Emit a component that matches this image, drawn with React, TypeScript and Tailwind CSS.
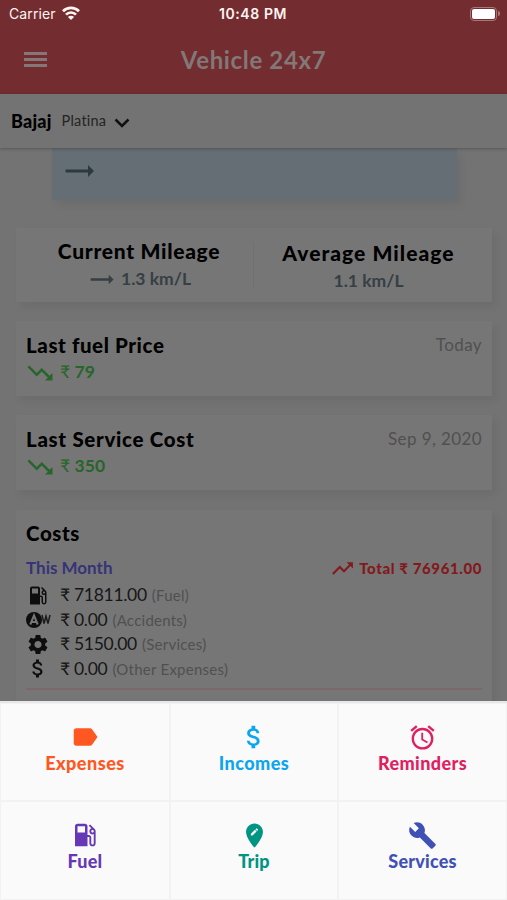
import React from "react";
import {
  MdLabel, MdAttachMoney, MdAccessAlarm, MdBuild, MdSettings, MdLocalGasStation,
  MdTrendingDown, MdTrendingUp, MdTrendingFlat, MdEditLocation,
} from "react-icons/md";

function AccidentIcon() {
  return (
    <svg viewBox="0 0 25 18" className="h-[18px] w-[25px] shrink-0">
      <circle cx="8" cy="9" r="8" fill="#0e0e0e" />
      <path d="M4.300 13.500 8 4.500l3.700 9M5.700 11h4.600" fill="none" stroke="#767676" strokeWidth="2" />
      <path d="m16 4 2 8.500 2-7.300 2 7.300L24 4" fill="none" stroke="#1c1c1c" strokeWidth="1.500" />
    </svg>
  );
}

const shadow = "shadow-[4px_5px_8px_rgba(0,0,0,0.06)]";

function PriceCard({ title, date, price, className, titleClass }: { title: string; date: string; price: string; className: string; titleClass: string }) {
  return (
    <section className={`mr-[15px] ml-4 h-[75px] shrink-0 bg-[#767676] px-[10px] pt-[11px] ${shadow} ${className}`}>
      <div className="flex h-[26px] items-center justify-between">
        <h2 className={`text-[20.500px] font-black text-black ${titleClass}`}>{title}</h2>
        <span className="text-[17px] tracking-[0.4px] text-[#505050]">{date}</span>
      </div>
      <div className="flex h-[29px] items-center text-[#28652b]">
        <MdTrendingDown className="-ml-px h-[30px] w-[30px]" />
        <span className="ml-[5px] text-[17.500px]">₹ <span className="font-bold">{price}</span></span>
      </div>
    </section>
  );
}

function CostRow({ icon, value, label }: { icon: React.ReactNode; value: string; label: string }) {
  return (
    <div className="flex h-[24.500px] items-center">
      <div className="flex w-6 justify-center text-[#0e0e0e]">{icon}</div>
      <span className="ml-[10px] text-[17.500px] tracking-[-0.300px] text-[#161616]">₹ {value}</span>
      <span className="ml-[5px] text-[15px] tracking-[0.250px] text-[#505050]">({label})</span>
    </div>
  );
}

function Action({ icon, label, className }: { icon: React.ReactNode; label: string; className: string }) {
  return (
    <button className={`flex flex-col items-center bg-[#fafafa] pt-[19px] ${className}`}>
      <span className="flex h-7 items-center justify-center">{icon}</span>
      <span className="text-[18px] leading-6 font-black">{label}</span>
    </button>
  );
}

export default function App() {
  return (
    <div className="flex h-[900px] w-[507px] flex-col overflow-hidden bg-[#737373] font-['Lato','Noto_Sans',sans-serif]">
      <header className="z-10 h-[94px] shrink-0 bg-[#732c2f]">
        <div className="grid h-[27px] grid-cols-3 items-center px-[9px] font-['Inter',sans-serif] text-[14px] text-[#fff4f2]">
          <div className="flex items-center gap-[6px]">
            <span className="tracking-[0.1px]">Carrier</span>
            <svg viewBox="0 0 18 14" className="-mt-[2px] h-[14px] w-[18px]" fill="none" stroke="currentColor" strokeWidth="2.700">
              <path d="M1 5.200a11.400 11.400 0 0 1 16 0M4 8.600a7 7 0 0 1 10 0" />
              <path d="M9 14 5.900 11a4.400 4.400 0 0 1 6.200 0z" fill="currentColor" stroke="none" />
            </svg>
          </div>
          <span className="-ml-px text-center font-semibold tracking-[0.600px] whitespace-nowrap">10:48 PM</span>
          <div className="-mr-[2px] flex items-center justify-end gap-px">
            <span className="h-[14px] w-[27px] rounded-[4px] border border-[#a87778] p-px">
              <span className="block h-full rounded-[2px] bg-white" />
            </span>
            <span className="h-[5px] w-[2px] rounded-r bg-[#a87778]" />
          </div>
        </div>
        <div className="grid h-[65px] grid-cols-[1fr_auto_1fr] items-center">
          <div className="ml-6 flex w-[23px] flex-col gap-[3px]">
            <i className="h-[3px] bg-[#857777]" /><i className="h-[3px] bg-[#857777]" /><i className="h-[3px] bg-[#857777]" />
          </div>
          <h1 className="text-[24px] font-bold tracking-[0.650px] text-[#827878]">Vehicle 24x7</h1>
        </div>
      </header>
      <div className="z-10 flex h-[54px] shrink-0 items-center bg-[#737373] pl-[11px] shadow-[0_1px_3px_rgba(0,0,0,0.25)]">
        <span className="text-[18px] font-black tracking-[0.200px] text-black">Bajaj</span>
        <span className="ml-[10px] text-[14.500px] tracking-[0.200px] text-[#242424]">Platina</span>
        <svg viewBox="0 0 16 10" className="mt-[4px] ml-2 h-[10px] w-4" fill="none" stroke="#111" strokeWidth="2.500"><path d="m1.500 1.500 6.500 6.500 6.500-6.500" /></svg>
      </div>
      <main className="flex min-h-0 flex-1 flex-col overflow-hidden">
        <div className={`mr-[50px] ml-[52px] h-[52px] shrink-0 bg-[#666e75] pt-[5px] pl-[8px] ${shadow}`}>
          <MdTrendingFlat className="h-[36px] w-[38px] text-[#2c3a40]" />
        </div>
        <section className={`mt-7 mr-[15px] ml-4 flex h-[74px] shrink-0 items-center bg-[#767676] ${shadow}`}>
          <div className="flex w-[237px] flex-col items-center pl-[9px]">
            <h2 className="text-[21px] leading-7 font-black tracking-[0.700px] text-black">Current Mileage</h2>
            <p className="flex h-7 items-center gap-[5px] text-[17.500px] font-bold text-[#353f44]"><MdTrendingFlat className="h-[29px] w-[29px]" />1.3 km/L</p>
          </div>
          <div className="h-[46px] w-px bg-[#707070]" />
          <div className="mr-[9px] flex flex-1 flex-col items-center pt-1">
            <h2 className="text-[21px] leading-7 font-black tracking-[1.050px] text-black">Average Mileage</h2>
            <p className="text-[17.500px] leading-7 font-bold text-[#353f44]">1.1 km/L</p>
          </div>
        </section>
        <PriceCard title="Last fuel Price" date="Today" price="79" className="mt-[19px]" titleClass="tracking-[0.600px]" />
        <PriceCard title="Last Service Cost" date="Sep 9, 2020" price="350" className="mt-[19px]" titleClass="tracking-[0.700px]" />
        <section className={`mt-5 mr-[15px] ml-4 h-[240px] shrink-0 bg-[#767676] px-[10px] pt-[9px] ${shadow}`}>
          <h2 className="text-[20.500px] leading-7 font-black tracking-[0.600px] text-black">Costs</h2>
          <div className="mt-2 flex h-[26px] items-center justify-between">
            <h3 className="text-[17px] font-bold text-[#363478]">This Month</h3>
            <div className="flex items-center text-[#821a1d]">
              <MdTrendingUp className="mr-1 h-[25px] w-[25px]" />
              <span className="text-[15px] font-black tracking-[0.600px]">Total ₹ 76961.00</span>
            </div>
          </div>
          <div className="pt-[2px]">
            <CostRow icon={<MdLocalGasStation className="h-[25px] w-[25px]" />} value="71811.00" label="Fuel" />
            <CostRow icon={<AccidentIcon />} value="0.00" label="Accidents" />
            <CostRow icon={<MdSettings className="h-[25px] w-[25px]" />} value="5150.00" label="Services" />
            <CostRow icon={<MdAttachMoney className="h-[25px] w-[25px]" />} value="0.00" label="Other Expenses" />
          </div>
          <div className="mt-[7px] h-[2px] bg-[#7a686a]" />
        </section>
      </main>
      <nav className="grid h-[199px] shrink-0 grid-cols-[168px_166px_167px] grid-rows-[96px_97px] gap-[2px] border-t-2 border-[#e8e8e8] bg-[#f2f2f2] pt-px pl-px">
        <Action icon={<MdLabel className="h-[30px] w-[30px]" />} label="Expenses" className="tracking-[0.500px] text-[#ff5722]" />
        <Action icon={<MdAttachMoney className="h-[30px] w-[30px]" />} label="Incomes" className="tracking-[0.450px] text-[#0ba5f2]" />
        <Action icon={<MdAccessAlarm className="h-[29px] w-[29px]" />} label="Reminders" className="tracking-[0.400px] text-[#e01e62]" />
        <Action icon={<MdLocalGasStation className="h-[30px] w-[30px]" />} label="Fuel" className="tracking-[0.200px] text-[#6638b6]" />
        <Action icon={<MdEditLocation className="h-[29px] w-[29px]" />} label="Trip" className="tracking-[0.200px] text-[#009483]" />
        <Action icon={<MdBuild className="h-[29px] w-[29px]" />} label="Services" className="tracking-[0.200px] text-[#3f51b5]" />
      </nav>
    </div>
  );
}
